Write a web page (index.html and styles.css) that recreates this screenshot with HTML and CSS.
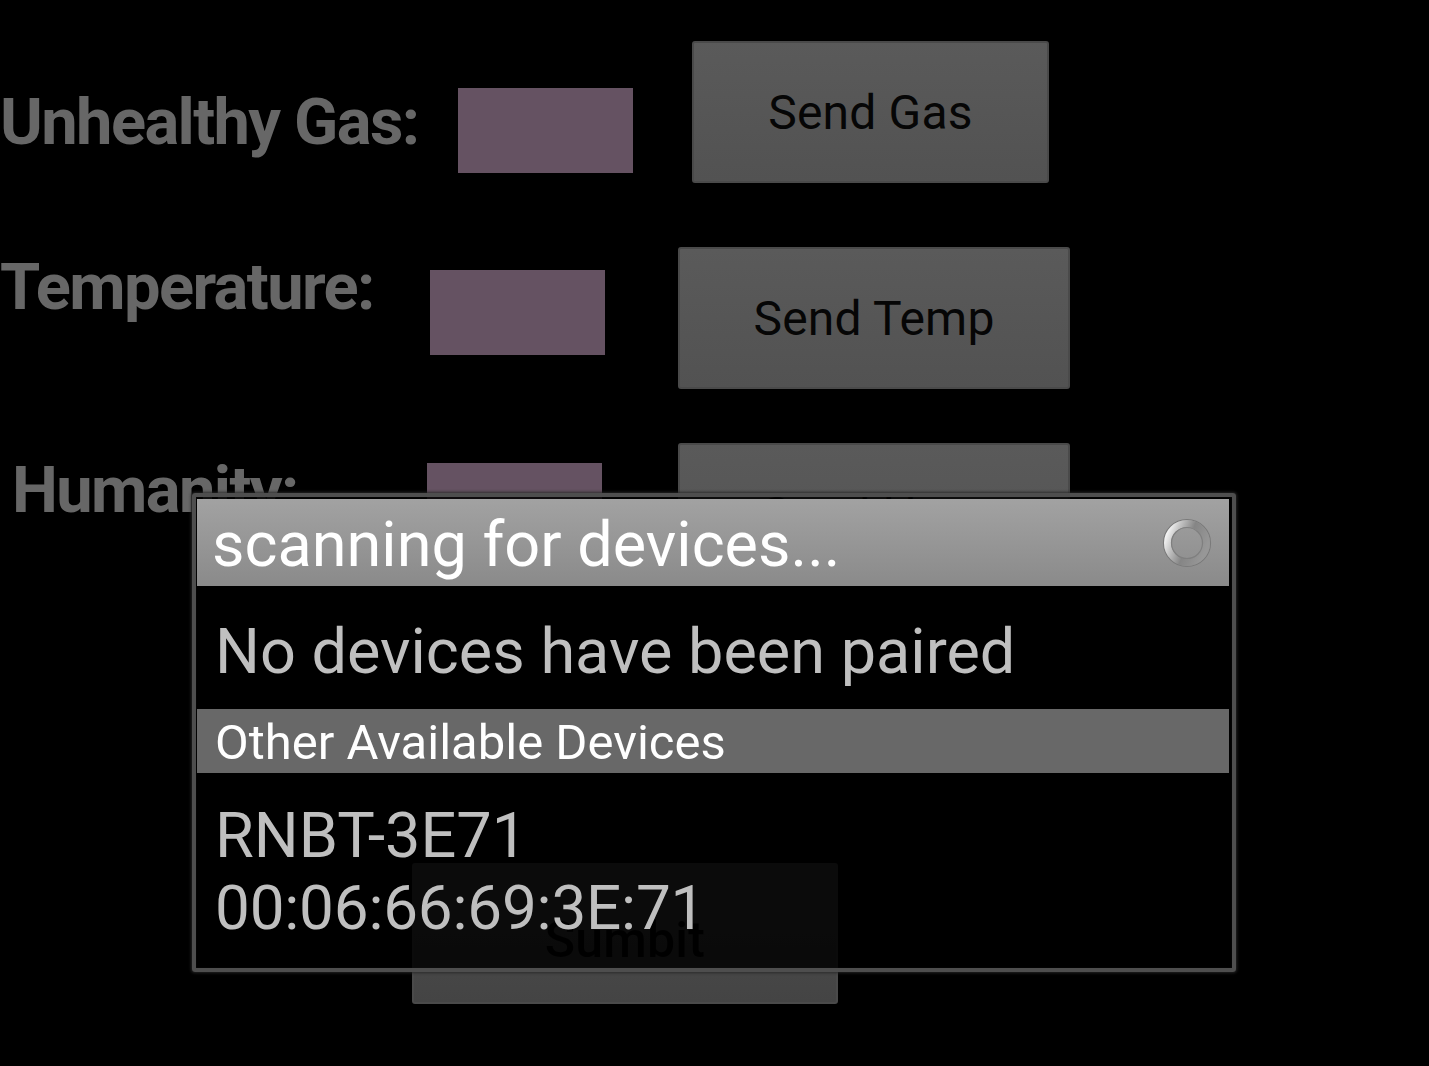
FILE: index.html
```html
<!DOCTYPE html>
<html>
<head>
<meta charset="utf-8">
<link rel="stylesheet" href="styles.css">
</head>
<body>
<div class="screen">
  <div class="form">
    <div class="row row-gas">
      <div class="label">Unhealthy Gas:</div>
      <div class="field"></div>
      <div class="btn">Send Gas</div>
    </div>
    <div class="row row-temp">
      <div class="label">Temperature:</div>
      <div class="field"></div>
      <div class="btn">Send Temp</div>
    </div>
    <div class="row row-hum">
      <div class="label">Humanity:</div>
      <div class="field"></div>
      <div class="btn">Send Hum</div>
    </div>
    <div class="submit-row">
      <div class="btn btn-submit">Sumbit</div>
    </div>
  </div>

  <div class="dialog">
    <div class="dialog-title">
      <span class="title-text">scanning for devices...</span>
      <svg class="spinner" width="56" height="56" viewBox="0 0 56 56">
        <defs>
          <linearGradient id="ring" x1="0" y1="0.2" x2="1" y2="0.6">
            <stop offset="0" stop-color="#f4f4f4"/>
            <stop offset="0.22" stop-color="#c4c4c4"/>
            <stop offset="0.55" stop-color="#858585"/>
            <stop offset="1" stop-color="#979797"/>
          </linearGradient>
        </defs>
        <circle cx="28" cy="28" r="23.5" fill="none" stroke="#7a7a7a" stroke-width="1.2"/>
        <circle cx="28" cy="28" r="19.5" fill="none" stroke="url(#ring)" stroke-width="7"/>
        <circle cx="28" cy="28" r="15.5" fill="none" stroke="#7f7f7f" stroke-width="1.2"/>
      </svg>
    </div>
    <div class="paired">No devices have been paired</div>
    <div class="section-head">Other Available Devices</div>
    <div class="device">
      <div class="device-name">RNBT-3E71</div>
      <div class="device-addr">00:06:66:69:3E:71</div>
    </div>
  </div>
</div>
</body>
</html>
```

FILE: styles.css
```css
html, body {
  margin: 0;
  padding: 0;
  background: #000;
}

.screen {
  position: relative;
  width: 1429px;
  height: 1066px;
  overflow: hidden;
  background: #000;
  font-family: Roboto, "Noto Sans", sans-serif;
}

.form {
  display: flex;
  flex-direction: column;
  padding-top: 41px;
}

.row {
  display: flex;
  align-items: flex-start;
  height: 142px;
}

.row-temp { margin-top: 64px; }
.row-hum { margin-top: 54px; }

.label {
  box-sizing: border-box;
  flex: none;
  font-weight: 700;
  font-size: 65px;
  line-height: 65px;
  color: #676767;
  white-space: nowrap;
  letter-spacing: -1.6px;
}

.field {
  flex: none;
  width: 175px;
  height: 85px;
  background: #655262;
}

.btn {
  flex: none;
  box-sizing: border-box;
  height: 142px;
  display: flex;
  align-items: center;
  justify-content: center;
  background: linear-gradient(#5a5a5a, #525252);
  border: 2px solid #4a4a4a;
  border-radius: 3px;
  box-shadow: 0 0 2px rgba(0,0,0,0.8);
  color: #060606;
  font-size: 48px;
  letter-spacing: 0.2px;
}

/* row 1 */
.row-gas .label { width: 458px; margin-top: 49px; }
.row-gas .field { margin-top: 47px; }
.row-gas .btn { margin-left: 59px; width: 357px; }

/* row 2 */
.row-temp .label { width: 430px; margin-top: 8px; }
.row-temp .field { margin-top: 23px; }
.row-temp .btn { margin-left: 73px; width: 392px; }

/* row 3 */
.row-hum .label { width: 427px; padding-left: 12px; margin-top: 15px; }
.row-hum .field { margin-top: 20px; }
.row-hum .btn { margin-left: 76px; width: 392px; }

.submit-row {
  display: flex;
  margin-top: 278px;
  padding-left: 412px;
}

.btn-submit {
  width: 426px;
  height: 141px;
  font-size: 50px;
  font-weight: 500;
  background: linear-gradient(#4e4e4e, #444);
  padding-top: 12px;
}

/* dialog overlay */
.dialog {
  position: absolute;
  left: 192px;
  top: 493px;
  width: 1044px;
  height: 479px;
  box-sizing: border-box;
  border: 4px solid #4e4e4e;
  border-radius: 3px;
  padding: 2px 3px 2px 1px;
  background: rgba(0, 0, 0, 0.85);
  box-shadow: 0 0 3px 1px rgba(40,40,40,0.9), inset 0 0 1px #222;
  display: flex;
  flex-direction: column;
}

.dialog-title {
  flex: none;
  height: 87px;
  display: flex;
  align-items: center;
  justify-content: space-between;
  padding: 0 14px 0 15px;
  background: linear-gradient(#a2a2a2, #8a8a8a);
}

.title-text {
  color: #fff;
  font-size: 63px;
  line-height: 87px;
  padding-top: 3px;
  white-space: nowrap;
}

.spinner {
  flex: none;
  display: block;
}

.paired {
  flex: none;
  height: 123px;
  box-sizing: border-box;
  padding: 21px 0 0 18px;
  color: #bfbfbf;
  font-size: 63px;
  line-height: 90px;
  white-space: nowrap;
}

.section-head {
  flex: none;
  height: 64px;
  box-sizing: border-box;
  padding-left: 18px;
  background: #686868;
  color: #fff;
  font-size: 49px;
  line-height: 67px;
  white-space: nowrap;
}

.device {
  flex: 1;
  padding: 27px 0 0 18px;
  color: #bfbfbf;
  font-size: 63px;
  line-height: 72px;
  white-space: nowrap;
}

.device-addr {
  font-size: 62px;
  letter-spacing: -0.2px;
}
```
